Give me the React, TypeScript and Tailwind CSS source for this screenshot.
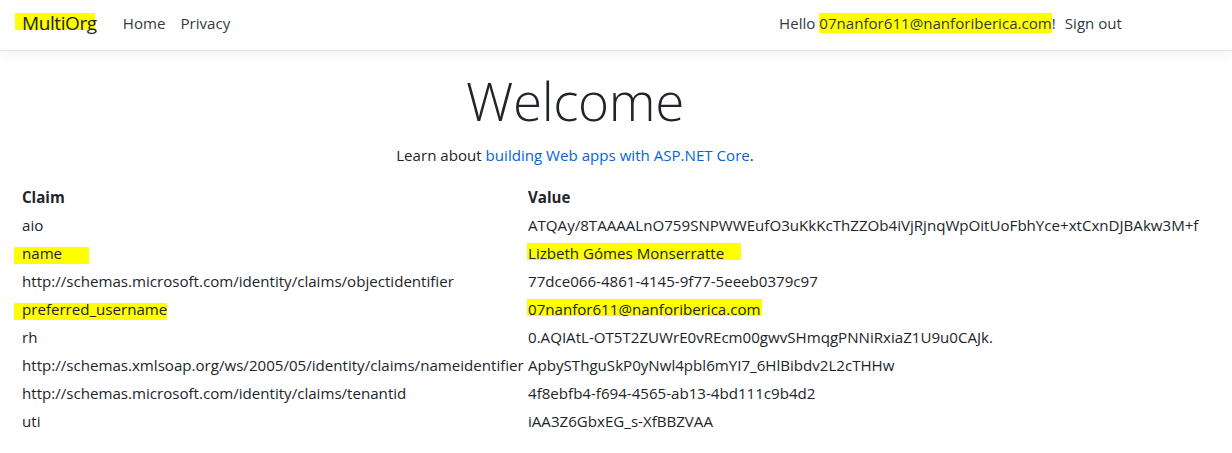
import React from "react";

const rows: [string, string, boolean?][] = [
  ["aio", "ATQAy/8TAAAALnO759SNPWWEufO3uKkKcThZZOb4iVjRjnqWpOitUoFbhYce+xtCxnDJBAkw3M+f"],
  ["name", "Lizbeth Gómes Monserratte", true],
  ["http://schemas.microsoft.com/identity/claims/objectidentifier", "77dce066-4861-4145-9f77-5eeeb0379c97"],
  ["preferred_username", "07nanfor611@nanforiberica.com", true],
  ["rh", "0.AQIAtL-OT5T2ZUWrE0vREcm00gwvSHmqgPNNiRxiaZ1U9u0CAJk."],
  ["http://schemas.xmlsoap.org/ws/2005/05/identity/claims/nameidentifier", "ApbySThguSkP0yNwl4pbl6mYI7_6HlBibdv2L2cTHHw"],
  ["http://schemas.microsoft.com/identity/claims/tenantid", "4f8ebfb4-f694-4565-ab13-4bd111c9b4d2"],
  ["uti", "iAA3Z6GbxEG_s-XfBBZVAA"],
];

export default function App() {
  return (
    <div
      className="min-h-[453px] w-[1232px] overflow-hidden bg-white text-[#212529]"
      style={{ fontFamily: '"Open Sans", "Noto Sans", sans-serif' }}
    >
      <header className="h-[51px] border-b border-[#e5e5e5] shadow-[0_4px_12px_rgba(0,0,0,0.05)]">
        <div className="ml-[7px] flex h-full w-[1136px] items-center px-[15px] pb-[4px] text-[15.1px]">
          <span className="relative mr-[26px] text-[19px] tracking-[-0.4px] text-[#212529]">
            <span className="absolute left-[-7px] top-[4px] h-[17px] w-[80px] bg-[#ffff00]" />
            <span className="relative">MultiOrg</span>
          </span>
          <span className="text-[#343a40]">Home</span>
          <span className="ml-[15px] text-[#343a40]">Privacy</span>
          <div className="ml-auto flex items-center text-[#343a40]">
            <span>
              Hello{" "}
              <span className="bg-[#ffff00]">07nanfor611@nanforiberica.com</span>!
            </span>
            <span className="ml-[9px] mr-[6px]">Sign out</span>
          </div>
        </div>
      </header>
      <main className="ml-[7px] w-[1136px] px-[15px] text-[15.1px]">
        <div className="pt-[18px] text-center">
          <h1 className="text-[53px] font-light leading-[1.2] tracking-[-0.4px]">Welcome</h1>
          <p className="mt-[10px] leading-[24px]">
            Learn about <span className="text-[#0366d6]">building Web apps with ASP.NET Core</span>.
          </p>
        </div>
        <div className="mt-[16px] grid grid-cols-[506px_1fr]">
          <div className="h-[28px] font-bold leading-[28px]">Claim</div>
          <div className="h-[28px] font-bold leading-[28px]">Value</div>
          {rows.map(([k, v, hl]) => (
            <React.Fragment key={k}>
              <div className="relative h-[28px] whitespace-nowrap leading-[28px]">
                {hl && <span className="absolute left-[-8px] top-[8px] h-[17px] bg-[#ffff00]" style={{ width: k === "name" ? 75 : 153 }} />}
                <span className="relative">{k}</span>
              </div>
              <div className="relative h-[28px] whitespace-nowrap leading-[28px]">
                {hl && <span className="absolute left-[-1px] top-[4px] h-[17px] bg-[#ffff00]" style={{ width: k === "name" ? 214 : 235 }} />}
                <span className="relative">{v}</span>
              </div>
            </React.Fragment>
          ))}
        </div>
      </main>
    </div>
  );
}
